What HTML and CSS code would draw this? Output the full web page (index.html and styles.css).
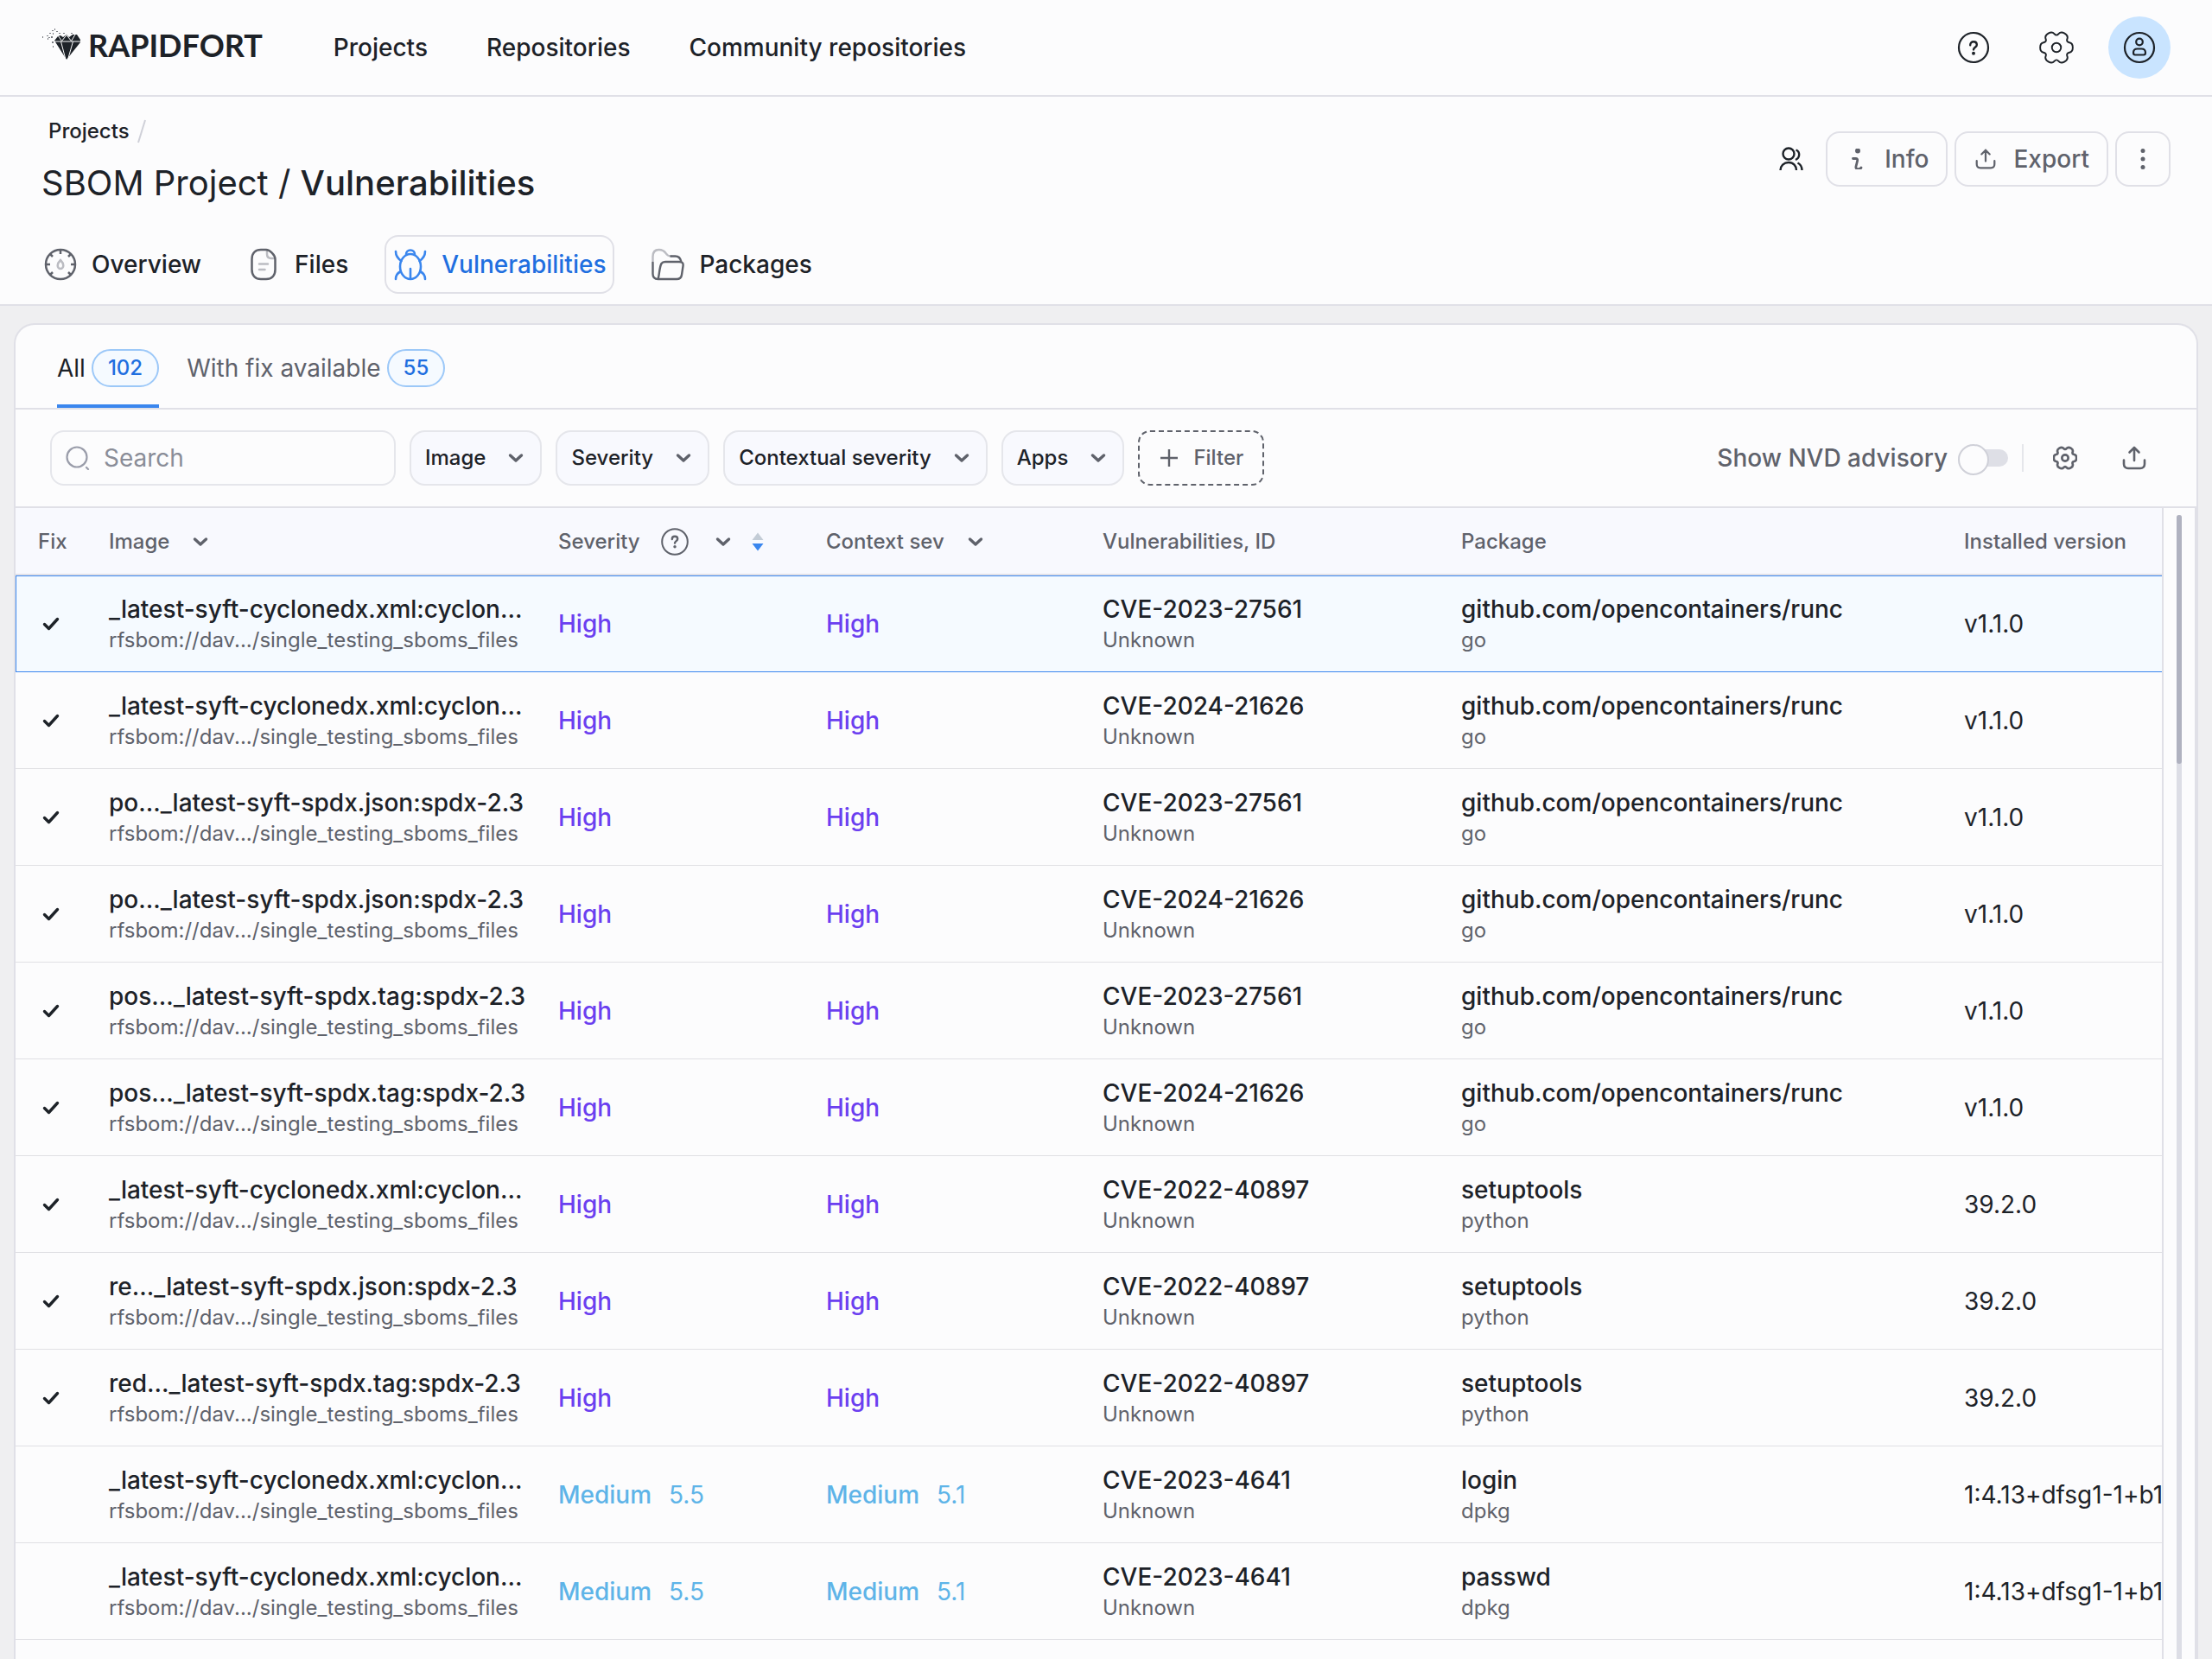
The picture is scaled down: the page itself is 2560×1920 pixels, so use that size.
FILE: index.html
```
<!DOCTYPE html>
<html lang="en">
<head>
<meta charset="utf-8">
<title>SBOM Project</title>
<link rel="stylesheet" href="styles.css">
</head>
<body>
<svg class="sprite" aria-hidden="true">
  <symbol id="chevron" viewBox="0 0 24 24"><path d="M5.500 9l6.500 6L18.500 9" fill="none" stroke="currentColor" stroke-width="3.400" stroke-linecap="round" stroke-linejoin="round"/></symbol>
  <symbol id="check" viewBox="0 0 32 32"><path d="M7.500 16.500l5 5L22.500 10.500" fill="none" stroke="currentColor" stroke-width="3.400" stroke-linecap="round" stroke-linejoin="round"/></symbol>
  <symbol id="help" viewBox="0 0 40 40"><circle cx="20" cy="20" r="17" fill="none" stroke="currentColor" stroke-width="2.200"/><path d="M16.200 17.200c0-2.400 1.600-4 3.800-4s3.800 1.500 3.800 3.700c0 2.700-3.800 3-3.800 5.500" fill="none" stroke="currentColor" stroke-width="2.400" stroke-linecap="round"/><circle cx="20" cy="26.800" r="2" fill="currentColor"/></symbol>
  <symbol id="gear" viewBox="-21 -21 42 42"><path d="M19.800 0Q19.800 5.300 15.750 6Q11.700 6.750 13.100 10.600Q14.500 14.500 9.900 17.150Q5.300 19.800 2.650 16.650Q0 13.500-2.650 16.650Q-5.300 19.800-9.900 17.150Q-14.500 14.500-13.100 10.600Q-11.700 6.750-15.750 6Q-19.800 5.300-19.800 0Q-19.800-5.300-15.750-6Q-11.700-6.750-13.100-10.600Q-14.500-14.500-9.900-17.150Q-5.300-19.800-2.650-16.650Q0-13.500 2.650-16.650Q5.300-19.800 9.900-17.150Q14.500-14.500 13.100-10.600Q11.700-6.750 15.750-6Q19.800-5.300 19.800 0z" fill="none" stroke="currentColor"/><circle r="5.500" fill="none" stroke="currentColor"/></symbol>
  <symbol id="upload" viewBox="0 0 28 28"><path d="M14 17V2M8.500 7.500L14 2l5.500 5.500M2 16.500V21c0 3 2 5 5 5h14c3 0 5-2 5-5v-4.500" fill="none" stroke="currentColor" stroke-width="2.600" stroke-linecap="round" stroke-linejoin="round"/></symbol>
</svg>

<header class="topbar">
  <a class="brand" href="#">
    <svg class="brand-mark" viewBox="0 0 48 40" aria-hidden="true">
      <path d="M15 15l4-5 3-1 3 2 4-3 3 3 4-3h5l4 6v3L29 37z" fill="#1d2228"/>
      <path d="M14 16h32M22.500 16L28 37M36.500 16L30.500 37M19 9l4.500 6.500 5.500-7 5.500 7 4.500-7.500" fill="none" stroke="#fcfcfd" stroke-width="1"/>
      <path d="M1 10h1v2H1zM6 9h2v1H6zM9 6h2v1H9zM12 3h2v1h-2zM13 6h1v2h-1zM15 1h1v2h-1zM8 11h2v1H8zM17 4h2v1h-2zM7 12h1v2H7zM11 10h2v2h-2zM12 16h2v2h-2zM13 21h1v2h-1zM25 6h2v1h-2zM34 6h2v1h-2zM20 6h2v1h-2z" fill="#777a80"/>
    </svg>
    <span>RAPIDFORT</span>
  </a>
  <nav class="main-nav">
    <a href="#">Projects</a>
    <a href="#">Repositories</a>
    <a href="#">Community repositories</a>
  </nav>
  <div class="top-actions">
    <button aria-label="Help"><svg class="i40"><use href="#help"/></svg></button>
    <button aria-label="Settings"><svg class="i40 gear-thin"><use href="#gear"/></svg></button>
    <button class="avatar" aria-label="Account"><svg class="i40" viewBox="0 0 40 40" fill="none" stroke="currentColor" stroke-width="2.200"><circle cx="20" cy="20" r="17"/><circle cx="20" cy="13.500" r="3.800"/><path d="M13 26c0-3 1.800-4.500 4.500-4.500h5c2.700 0 4.500 1.500 4.500 4.500 0 1.700-.8 2.500-2 2.500H15c-1.200 0-2-.8-2-2.500z"/></svg></button>
  </div>
</header>

<section class="page-head">
  <div class="head-row">
    <div>
      <div class="crumbs"><a href="#">Projects</a><svg viewBox="0 0 12 28" aria-hidden="true"><path d="M10 1L2 27" stroke="#cfd0d8" stroke-width="2"/></svg></div>
      <h1>SBOM Project / <strong>Vulnerabilities</strong></h1>
    </div>
    <div class="head-actions">
      <button class="bare" aria-label="Members"><svg class="i28" viewBox="0 0 28 28" fill="none" stroke="currentColor" stroke-width="2.400"><circle cx="11" cy="8" r="6.500"/><path d="M1.500 27c0-5 4-9 9.500-9s9 4 9 9M19.500 3.500c5 2 5 9-.5 11.500M21.500 18.500c3 1.500 5 4.500 5 8.500"/></svg></button>
      <button class="outline"><svg class="i24" viewBox="0 0 24 24" aria-hidden="true"><circle cx="13" cy="2.500" r="3" fill="currentColor"/><path d="M7.500 11.500h3c2 0 2.500 1 2 3l-1.500 6c-.5 2 .5 3.200 2.500 3.200 2 0 3-.7 3.500-1.700" fill="none" stroke="currentColor" stroke-width="2.800" stroke-linecap="round"/></svg>Info</button>
      <button class="outline"><svg class="i24"><use href="#upload"/></svg>Export</button>
      <button class="outline more" aria-label="More"><svg class="i24" viewBox="0 0 24 24" fill="currentColor"><circle cx="12" cy="2.500" r="2.500"/><circle cx="12" cy="12" r="2.500"/><circle cx="12" cy="21.500" r="2.500"/></svg></button>
    </div>
  </div>
  <nav class="section-tabs">
    <a href="#"><svg class="i40" viewBox="0 0 40 40" fill="none" stroke="#5f626b" stroke-width="2.500"><circle cx="20" cy="20" r="17"/><path d="M20 3v5M3 20h5M37 20h-5M8 8l3 3M32 8l-3 3M8 32l3-3M32 32l-3-3"/><path d="M20 15c2 2 3.300 3.800 3.300 6.300a3.300 3.800 0 0 1-6.600 0c0-2.500 1.300-4.300 3.300-6.300z" stroke="#bbbcc2"/></svg>Overview</a>
    <a href="#"><svg class="i40" viewBox="0 0 40 40" fill="none" stroke-width="2.500" stroke-linecap="round"><path d="M24 4v4c0 3.500 1.500 5 5 5h4M15 19.500h10M15 26h6.500" stroke="#bbbcc2"/><path d="M17 3h6c4 0 10.500 6 10.500 11v12c0 7-4 11-10.500 11h-6c-6.500 0-10.500-4-10.500-11V14c0-7 4-11 10.500-11z" stroke="#5f626b"/></svg>Files</a>
    <a href="#" class="current"><svg class="i40" viewBox="0 0 40 40" fill="none" stroke="#3a86ee" stroke-width="2.600" stroke-linecap="round"><ellipse cx="20" cy="22.500" rx="12" ry="14.500"/><path d="M15 8.500c0-3 2-5 5-5s5 2 5 5M20 25v11M3 5c0 5 2 8 6.500 11M37 5c0 5-2 8-6.500 11M3 37c0-4 1.500-6.500 5-8.500M37 37c0-4-1.500-6.500-5-8.500"/></svg>Vulnerabilities</a>
    <a href="#"><svg class="i40" viewBox="0 0 40 40" fill="none" stroke="#5f626b" stroke-width="2.400" stroke-linecap="round" stroke-linejoin="round"><path d="M2.500 17V11c0-5 2.500-8 7-8 4 0 6 1 8 4 1.500 2.500 3 3.500 6 3.500" stroke="#bbbcc2"/><path d="M23.500 10.500h5c4 0 6 2 7 6.500M2.500 18v13c0 4 2 6 6 6M8.500 37c1.500-3 1.500-14 4-18 1-1.500 2.500-2 4.500-2h16c4 0 5 1.500 4.500 5l-1.500 10c-.5 4-2.500 5-6 5z"/></svg>Packages</a>
  </nav>
</section>

<main class="panel">
  <nav class="list-tabs">
    <a href="#" class="current">All <span class="badge">102</span></a>
    <a href="#">With fix available <span class="badge">55</span></a>
  </nav>

  <div class="toolbar">
    <label class="search"><svg class="i28" viewBox="0 0 28 28" fill="none" stroke="#9a9daa" stroke-width="2.200" stroke-linecap="round"><circle cx="13" cy="13" r="11.500"/><path d="M24 25l2 2"/></svg><input type="search" placeholder="Search" aria-label="Search"></label>
    <button class="drop">Image<svg class="i24"><use href="#chevron"/></svg></button>
    <button class="drop">Severity<svg class="i24"><use href="#chevron"/></svg></button>
    <button class="drop">Contextual severity<svg class="i24"><use href="#chevron"/></svg></button>
    <button class="drop">Apps<svg class="i24"><use href="#chevron"/></svg></button>
    <button class="drop add"><svg class="i24" viewBox="0 0 24 24"><path d="M12 2v20M2 12h20" stroke="currentColor" stroke-width="2.400"/></svg>Filter</button>
    <div class="tools">
      <label class="switch">Show NVD advisory<input type="checkbox"></label>
      <span class="rule"></span>
      <button class="tool" aria-label="Table settings"><svg class="i28 gear-bold"><use href="#gear"/></svg></button>
      <button class="tool" aria-label="Export table"><svg class="i28"><use href="#upload"/></svg></button>
    </div>
  </div>

  <div class="table-wrap">
    <div class="table-view">
      <table>
        <colgroup><col class="c-fix"><col class="c-image"><col class="c-sev"><col class="c-ctx"><col class="c-vuln"><col class="c-pkg"><col></colgroup>
        <thead>
          <tr>
            <th>Fix</th>
            <th><div class="th">Image<svg class="i24"><use href="#chevron"/></svg></div></th>
            <th><div class="th">Severity<svg class="th-help" viewBox="0 0 32 32"><circle cx="16" cy="16" r="14.800" fill="none" stroke="currentColor" stroke-width="2"/><path d="M12.800 13c0-2 1.300-3.200 3.200-3.200s3.200 1.200 3.200 3c0 2.200-3.200 2.400-3.200 4.800" fill="none" stroke="currentColor" stroke-width="2.400" stroke-linecap="round"/><circle cx="16" cy="21.800" r="1.700" fill="currentColor"/></svg><svg class="i24"><use href="#chevron"/></svg><svg class="sort" viewBox="0 0 16 24"><path d="M8 1.500l6.500 8.500h-13z" fill="#c3ccd6"/><path d="M8 22.500l6.500-8.500h-13z" fill="#3a86ee"/></svg></div></th>
            <th><div class="th">Context sev<svg class="i24"><use href="#chevron"/></svg></div></th>
            <th>Vulnerabilities, ID</th>
            <th>Package</th>
            <th>Installed version</th>
          </tr>
        </thead>
        <tbody>
          <tr class="selected"><td><svg class="i32"><use href="#check"/></svg></td><td><b>_latest-syft-cyclonedx.xml:cyclon…</b><small>rfsbom://dav.../single_testing_sboms_files</small></td><td class="high">High</td><td class="high">High</td><td><b>CVE-2023-27561</b><small>Unknown</small></td><td><b>github.com/opencontainers/runc</b><small>go</small></td><td>v1.1.0</td></tr>
          <tr><td><svg class="i32"><use href="#check"/></svg></td><td><b>_latest-syft-cyclonedx.xml:cyclon…</b><small>rfsbom://dav.../single_testing_sboms_files</small></td><td class="high">High</td><td class="high">High</td><td><b>CVE-2024-21626</b><small>Unknown</small></td><td><b>github.com/opencontainers/runc</b><small>go</small></td><td>v1.1.0</td></tr>
          <tr><td><svg class="i32"><use href="#check"/></svg></td><td><b>po…_latest-syft-spdx.json:spdx-2.3</b><small>rfsbom://dav.../single_testing_sboms_files</small></td><td class="high">High</td><td class="high">High</td><td><b>CVE-2023-27561</b><small>Unknown</small></td><td><b>github.com/opencontainers/runc</b><small>go</small></td><td>v1.1.0</td></tr>
          <tr><td><svg class="i32"><use href="#check"/></svg></td><td><b>po…_latest-syft-spdx.json:spdx-2.3</b><small>rfsbom://dav.../single_testing_sboms_files</small></td><td class="high">High</td><td class="high">High</td><td><b>CVE-2024-21626</b><small>Unknown</small></td><td><b>github.com/opencontainers/runc</b><small>go</small></td><td>v1.1.0</td></tr>
          <tr><td><svg class="i32"><use href="#check"/></svg></td><td><b>pos…_latest-syft-spdx.tag:spdx-2.3</b><small>rfsbom://dav.../single_testing_sboms_files</small></td><td class="high">High</td><td class="high">High</td><td><b>CVE-2023-27561</b><small>Unknown</small></td><td><b>github.com/opencontainers/runc</b><small>go</small></td><td>v1.1.0</td></tr>
          <tr><td><svg class="i32"><use href="#check"/></svg></td><td><b>pos…_latest-syft-spdx.tag:spdx-2.3</b><small>rfsbom://dav.../single_testing_sboms_files</small></td><td class="high">High</td><td class="high">High</td><td><b>CVE-2024-21626</b><small>Unknown</small></td><td><b>github.com/opencontainers/runc</b><small>go</small></td><td>v1.1.0</td></tr>
          <tr><td><svg class="i32"><use href="#check"/></svg></td><td><b>_latest-syft-cyclonedx.xml:cyclon…</b><small>rfsbom://dav.../single_testing_sboms_files</small></td><td class="high">High</td><td class="high">High</td><td><b>CVE-2022-40897</b><small>Unknown</small></td><td><b>setuptools</b><small>python</small></td><td>39.2.0</td></tr>
          <tr><td><svg class="i32"><use href="#check"/></svg></td><td><b>re…_latest-syft-spdx.json:spdx-2.3</b><small>rfsbom://dav.../single_testing_sboms_files</small></td><td class="high">High</td><td class="high">High</td><td><b>CVE-2022-40897</b><small>Unknown</small></td><td><b>setuptools</b><small>python</small></td><td>39.2.0</td></tr>
          <tr><td><svg class="i32"><use href="#check"/></svg></td><td><b>red…_latest-syft-spdx.tag:spdx-2.3</b><small>rfsbom://dav.../single_testing_sboms_files</small></td><td class="high">High</td><td class="high">High</td><td><b>CVE-2022-40897</b><small>Unknown</small></td><td><b>setuptools</b><small>python</small></td><td>39.2.0</td></tr>
          <tr><td></td><td><b>_latest-syft-cyclonedx.xml:cyclon…</b><small>rfsbom://dav.../single_testing_sboms_files</small></td><td class="medium">Medium<span class="score">5.5</span></td><td class="medium">Medium<span class="score">5.1</span></td><td><b>CVE-2023-4641</b><small>Unknown</small></td><td><b>login</b><small>dpkg</small></td><td>1:4.13+dfsg1-1+b1</td></tr>
          <tr><td></td><td><b>_latest-syft-cyclonedx.xml:cyclon…</b><small>rfsbom://dav.../single_testing_sboms_files</small></td><td class="medium">Medium<span class="score">5.5</span></td><td class="medium">Medium<span class="score">5.1</span></td><td><b>CVE-2023-4641</b><small>Unknown</small></td><td><b>passwd</b><small>dpkg</small></td><td>1:4.13+dfsg1-1+b1</td></tr>
        </tbody>
      </table>
    </div>
    <div class="scroll-rail"><div class="track"><div class="thumb"></div></div></div>
  </div>
</main>
</body>
</html>
```
FILE: styles.css
```
* { box-sizing: border-box; }

body {
  margin: 0;
  height: 100vh;
  overflow: hidden;
  display: flex;
  flex-direction: column;
  background: #efeff1;
  color: #1d2228;
  font: 500 28px/36px Inter, "Liberation Sans", sans-serif;
}

a { color: inherit; text-decoration: none; }
button { margin: 0; padding: 0; border: 0; background: none; color: inherit; font: inherit; display: flex; align-items: center; justify-content: center; }
svg { display: block; flex: none; }
.sprite { position: absolute; width: 0; height: 0; }
.i24 { width: 24px; height: 24px; }
.i28 { width: 28px; height: 28px; }
.i32 { width: 32px; height: 32px; }
.i40 { width: 40px; height: 40px; }
.gear-thin { stroke-width: 2; }
.gear-bold { stroke-width: 4; }

.topbar {
  flex: none;
  height: 112px;
  display: flex;
  align-items: center;
  padding: 0 48px;
  background: #fcfcfd;
  border-bottom: 2px solid #e0e0e7;
}
.brand { display: flex; align-items: center; gap: 6px; font: 700 36px/40px Lato, sans-serif; padding-bottom: 6px; }
.brand-mark { width: 48px; height: 40px; }
.main-nav { display: flex; gap: 68px; margin-left: 82px; }
.top-actions { display: flex; align-items: center; gap: 24px; margin-left: auto; }
.top-actions button { height: 72px; width: 72px; }
.top-actions .avatar { border-radius: 50%; background: #c9e4ff; }

.page-head {
  flex: none;
  padding: 24px 48px 12px;
  background: #fcfcfd;
  border-bottom: 2px solid #e0e0e7;
}
.head-row { display: flex; justify-content: space-between; }
.crumbs { display: flex; align-items: center; gap: 8px; padding-left: 8px; font-size: 24px; line-height: 32px; }
.crumbs svg { width: 12px; height: 28px; }
h1 { margin: 16px 0 32px; font-size: 40px; line-height: 56px; font-weight: 400; }
h1 strong { font-weight: 500; }
.head-actions { display: flex; gap: 8px; padding-top: 16px; color: #5f626b; }
.outline { height: 64px; padding: 0 20px 0 22px; gap: 20px; border: 2px solid #e0e0e7; border-radius: 16px; }
.more { width: 64px; padding: 0; }
.bare { width: 64px; height: 64px; color: #1d2228; }

.section-tabs { display: flex; gap: 32px; margin: 0 -8px; }
.section-tabs a { height: 68px; display: flex; align-items: center; gap: 16px; padding: 0 8px; border: 2px solid transparent; border-radius: 16px; }
.section-tabs .current { color: #1f6fe0; border-color: #e0e0e7; }

.panel {
  flex: 1;
  min-height: 0;
  margin: 20px 16px 0;
  display: flex;
  flex-direction: column;
  overflow: hidden;
  background: #fcfcfd;
  border: 2px solid #e0e0e7;
  border-bottom: 0;
  border-radius: 24px 24px 0 0;
}

.list-tabs { flex: none; display: flex; gap: 32px; height: 98px; padding: 0 48px; border-bottom: 2px solid #e0e0e7; color: #5f626b; font-weight: 400; }
.list-tabs a { display: flex; align-items: center; gap: 7px; padding-top: 8px; border-bottom: 4px solid transparent; }
.list-tabs .current { color: #1d2228; border-color: #3a86ee; }
.badge { height: 44px; padding: 0 17px; border: 2px solid #9cc8f8; border-radius: 22px; background: #f5faff; color: #1f6fe0; font-size: 24px; line-height: 40px; font-weight: 500; }

.toolbar { flex: none; display: flex; align-items: center; gap: 16px; height: 114px; padding: 0 40px; border-bottom: 2px solid #e0e0e7; }
.search { width: 400px; height: 64px; display: flex; align-items: center; gap: 16px; padding: 0 16px; border: 2px solid #e5e6eb; border-radius: 16px; }
.search input { flex: 1; min-width: 0; padding: 0; border: 0; outline: 0; background: none; color: inherit; font: inherit; font-weight: 400; }
.search input::placeholder { color: #8a8d98; opacity: 1; }
.drop { height: 64px; gap: 23px; padding: 0 16px; border: 2px solid #e5e6eb; border-radius: 18px; background: #f8f9fe; font-size: 24px; line-height: 32px; }
.drop svg { color: #5f626b; }
.add { gap: 16px; padding: 0 22px; border: 2px dashed #5f626b; border-radius: 14px; background: none; color: #5f626b; }
.tools { display: flex; align-items: center; gap: 16px; margin-left: auto; color: #5f626b; }
.switch { display: flex; align-items: center; gap: 12px; }
.switch input { appearance: none; width: 58px; height: 20px; margin: 0; border-radius: 10px; background: #dedfe6; }
.switch input::before { content: ""; display: block; width: 32px; height: 32px; margin-top: -6px; border: 2px solid #cfd0d8; border-radius: 50%; background: #fcfcfd; }
.rule { width: 2px; height: 32px; background: #e5e6eb; }
.tool { width: 64px; height: 64px; }

.table-wrap { flex: 1; min-height: 0; display: flex; border-right: 2px solid #e0e0e7; }
.table-view { flex: 1; min-width: 0; overflow: hidden; border-right: 2px solid #e0e0e7; }
.scroll-rail { width: 36px; display: flex; justify-content: center; padding-top: 8px; }
.track { width: 6px; background: #dddee6; border-radius: 3px 3px 0 0; }
.thumb { width: 6px; height: 288px; border-radius: 3px; background: #b0b2c0; }

table { width: 100%; table-layout: fixed; border-collapse: separate; border-spacing: 0; }
.c-fix { width: 82px; }
.c-image { width: 520px; }
.c-sev { width: 310px; }
.c-ctx { width: 320px; }
.c-vuln { width: 415px; }
.c-pkg { width: 582px; }
th, td { padding: 0 0 0 26px; text-align: left; white-space: nowrap; overflow: hidden; vertical-align: middle; }
th { height: 78px; padding-top: 2px; background: #f8f9fe; border-bottom: 2px solid #e0e0e7; color: #5f626b; font-size: 24px; line-height: 32px; font-weight: 500; }
.th { display: flex; align-items: center; gap: 24px; }
.th-help { width: 32px; height: 32px; margin-right: 4px; }
.sort { width: 16px; height: 24px; margin-left: -4px; }
td { height: 112px; border-bottom: 1px solid #e0e0e4; font-weight: 400; }
td b { display: block; font-weight: 500; }
td small { display: block; margin-top: 2px; font-size: 24px; line-height: 32px; color: #5f626b; }
.selected td { background: #f5faff; border-top: 1px solid #3a86ee; border-bottom-color: #3a86ee; }
.selected td:first-child { border-left: 1px solid #3a86ee; padding-left: 25px; }
.high { color: #6b3ff0; font-weight: 500; }
.medium { color: #5eb4e8; font-weight: 500; }
.score { margin-left: 20px; font-weight: 400; }
```
